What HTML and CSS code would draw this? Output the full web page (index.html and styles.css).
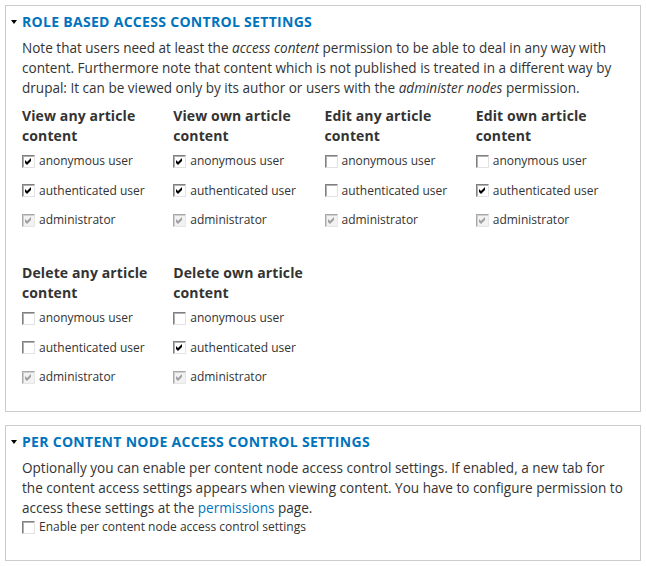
FILE: index.html
```html
<!DOCTYPE html>
<html>
<head>
  <title>Content Access</title>
  <link rel="stylesheet" href="styles.css">
</head>
<body>
  <div class="panel">
    <h2 class="panel-title"><span class="arrow"></span>Role based access control settings</h2>
    <p class="panel-desc">Note that users need at least the <em>access content</em> permission to be able to deal in any way with content. Furthermore note that content which is not published is treated in a different way by drupal: It can be viewed only by its author or users with the <em>administer nodes</em> permission.</p>

    <div class="perm-grid">
      <div class="perm">
        <h3>View any article content</h3>
        <ul class="roles">
          <li><span class="box checked"><svg viewBox="0 0 11 11"><polygon points="2,4 4,6 8,2 8,5 4,9 2,7"/></svg></span>anonymous user</li>
          <li><span class="box checked"><svg viewBox="0 0 11 11"><polygon points="2,4 4,6 8,2 8,5 4,9 2,7"/></svg></span>authenticated user</li>
          <li><span class="box checked disabled"><svg viewBox="0 0 11 11"><polygon points="2,4 4,6 8,2 8,5 4,9 2,7"/></svg></span>administrator</li>
        </ul>
      </div>
      <div class="perm">
        <h3>View own article content</h3>
        <ul class="roles">
          <li><span class="box checked"><svg viewBox="0 0 11 11"><polygon points="2,4 4,6 8,2 8,5 4,9 2,7"/></svg></span>anonymous user</li>
          <li><span class="box checked"><svg viewBox="0 0 11 11"><polygon points="2,4 4,6 8,2 8,5 4,9 2,7"/></svg></span>authenticated user</li>
          <li><span class="box checked disabled"><svg viewBox="0 0 11 11"><polygon points="2,4 4,6 8,2 8,5 4,9 2,7"/></svg></span>administrator</li>
        </ul>
      </div>
      <div class="perm">
        <h3>Edit any article content</h3>
        <ul class="roles">
          <li><span class="box"></span>anonymous user</li>
          <li><span class="box"></span>authenticated user</li>
          <li><span class="box checked disabled"><svg viewBox="0 0 11 11"><polygon points="2,4 4,6 8,2 8,5 4,9 2,7"/></svg></span>administrator</li>
        </ul>
      </div>
      <div class="perm">
        <h3>Edit own article content</h3>
        <ul class="roles">
          <li><span class="box"></span>anonymous user</li>
          <li><span class="box checked"><svg viewBox="0 0 11 11"><polygon points="2,4 4,6 8,2 8,5 4,9 2,7"/></svg></span>authenticated user</li>
          <li><span class="box checked disabled"><svg viewBox="0 0 11 11"><polygon points="2,4 4,6 8,2 8,5 4,9 2,7"/></svg></span>administrator</li>
        </ul>
      </div>
      <div class="perm">
        <h3>Delete any article content</h3>
        <ul class="roles">
          <li><span class="box"></span>anonymous user</li>
          <li><span class="box"></span>authenticated user</li>
          <li><span class="box checked disabled"><svg viewBox="0 0 11 11"><polygon points="2,4 4,6 8,2 8,5 4,9 2,7"/></svg></span>administrator</li>
        </ul>
      </div>
      <div class="perm">
        <h3>Delete own article content</h3>
        <ul class="roles">
          <li><span class="box"></span>anonymous user</li>
          <li><span class="box checked"><svg viewBox="0 0 11 11"><polygon points="2,4 4,6 8,2 8,5 4,9 2,7"/></svg></span>authenticated user</li>
          <li><span class="box checked disabled"><svg viewBox="0 0 11 11"><polygon points="2,4 4,6 8,2 8,5 4,9 2,7"/></svg></span>administrator</li>
        </ul>
      </div>
    </div>
  </div>

  <div class="panel">
    <h2 class="panel-title"><span class="arrow"></span>Per content node access control settings</h2>
    <p class="panel-desc last">Optionally you can enable per content node access control settings. If enabled, a new tab for the content access settings appears when viewing content. You have to configure permission to access these settings at the <a href="#">permissions</a> page.</p>
    <div class="option"><span class="box"></span>Enable per content node access control settings</div>
  </div>
</body>
</html>
```

FILE: styles.css
```css
body {
  margin: 0;
  padding: 5px 0 0;
  background-color: #fff;
  color: #333;
  font-family: "Open Sans", "Noto Sans", sans-serif;
  font-size: 13.55px;
  line-height: 20px;
}

.panel {
  margin: 0 5px 13px;
  padding: 6px 13px 24px 16px;
  border: 1px solid #ccc;
}

.panel-title {
  display: flex;
  align-items: center;
  gap: 5px;
  margin: 0 0 6px -11px;
  color: #0074bd;
  font-size: 14px;
  font-weight: bold;
  letter-spacing: 0.3px;
  line-height: 20px;
  text-transform: uppercase;
}

.arrow {
  width: 0;
  height: 0;
  border-left: 3px solid transparent;
  border-right: 3px solid transparent;
  border-top: 4px solid #000;
}

.panel-desc {
  margin: 0 0 8px;
}

.panel-desc.last {
  margin-bottom: 0;
}

.panel-desc a {
  color: #0074bd;
  text-decoration: none;
}

.perm-grid {
  display: grid;
  grid-template-columns: repeat(4, 1fr);
  row-gap: 33px;
}

.perm h3 {
  margin: 0 0 5px;
  padding-right: 10px;
  font-size: 14px;
  font-weight: bold;
  letter-spacing: 0.12px;
  line-height: 20px;
}

.roles {
  display: flex;
  flex-direction: column;
  gap: 9.5px;
  margin: 0;
  padding: 0;
  list-style: none;
}

.roles li,
.option {
  display: flex;
  align-items: center;
  font-size: 12px;
  line-height: 20px;
}

.option {
  line-height: 18px;
}

.box {
  box-sizing: border-box;
  flex: none;
  width: 13px;
  height: 13px;
  margin-right: 4px;
  border: 1px solid;
  border-color: #808080 #e2e2e2 #e2e2e2 #808080;
  box-shadow: inset 1px 1px 0 #b0b0b0;
  background-color: #fff;
}

.box svg {
  display: block;
  width: 11px;
  height: 11px;
  fill: #000;
}

.box.disabled {
  border-color: #a8a8a8 #e6e6e6 #e6e6e6 #a8a8a8;
  box-shadow: inset 1px 1px 0 #d0d0d0;
  background-color: #f2f2f2;
}

.box.disabled svg {
  fill: #a0a0a0;
}
```
